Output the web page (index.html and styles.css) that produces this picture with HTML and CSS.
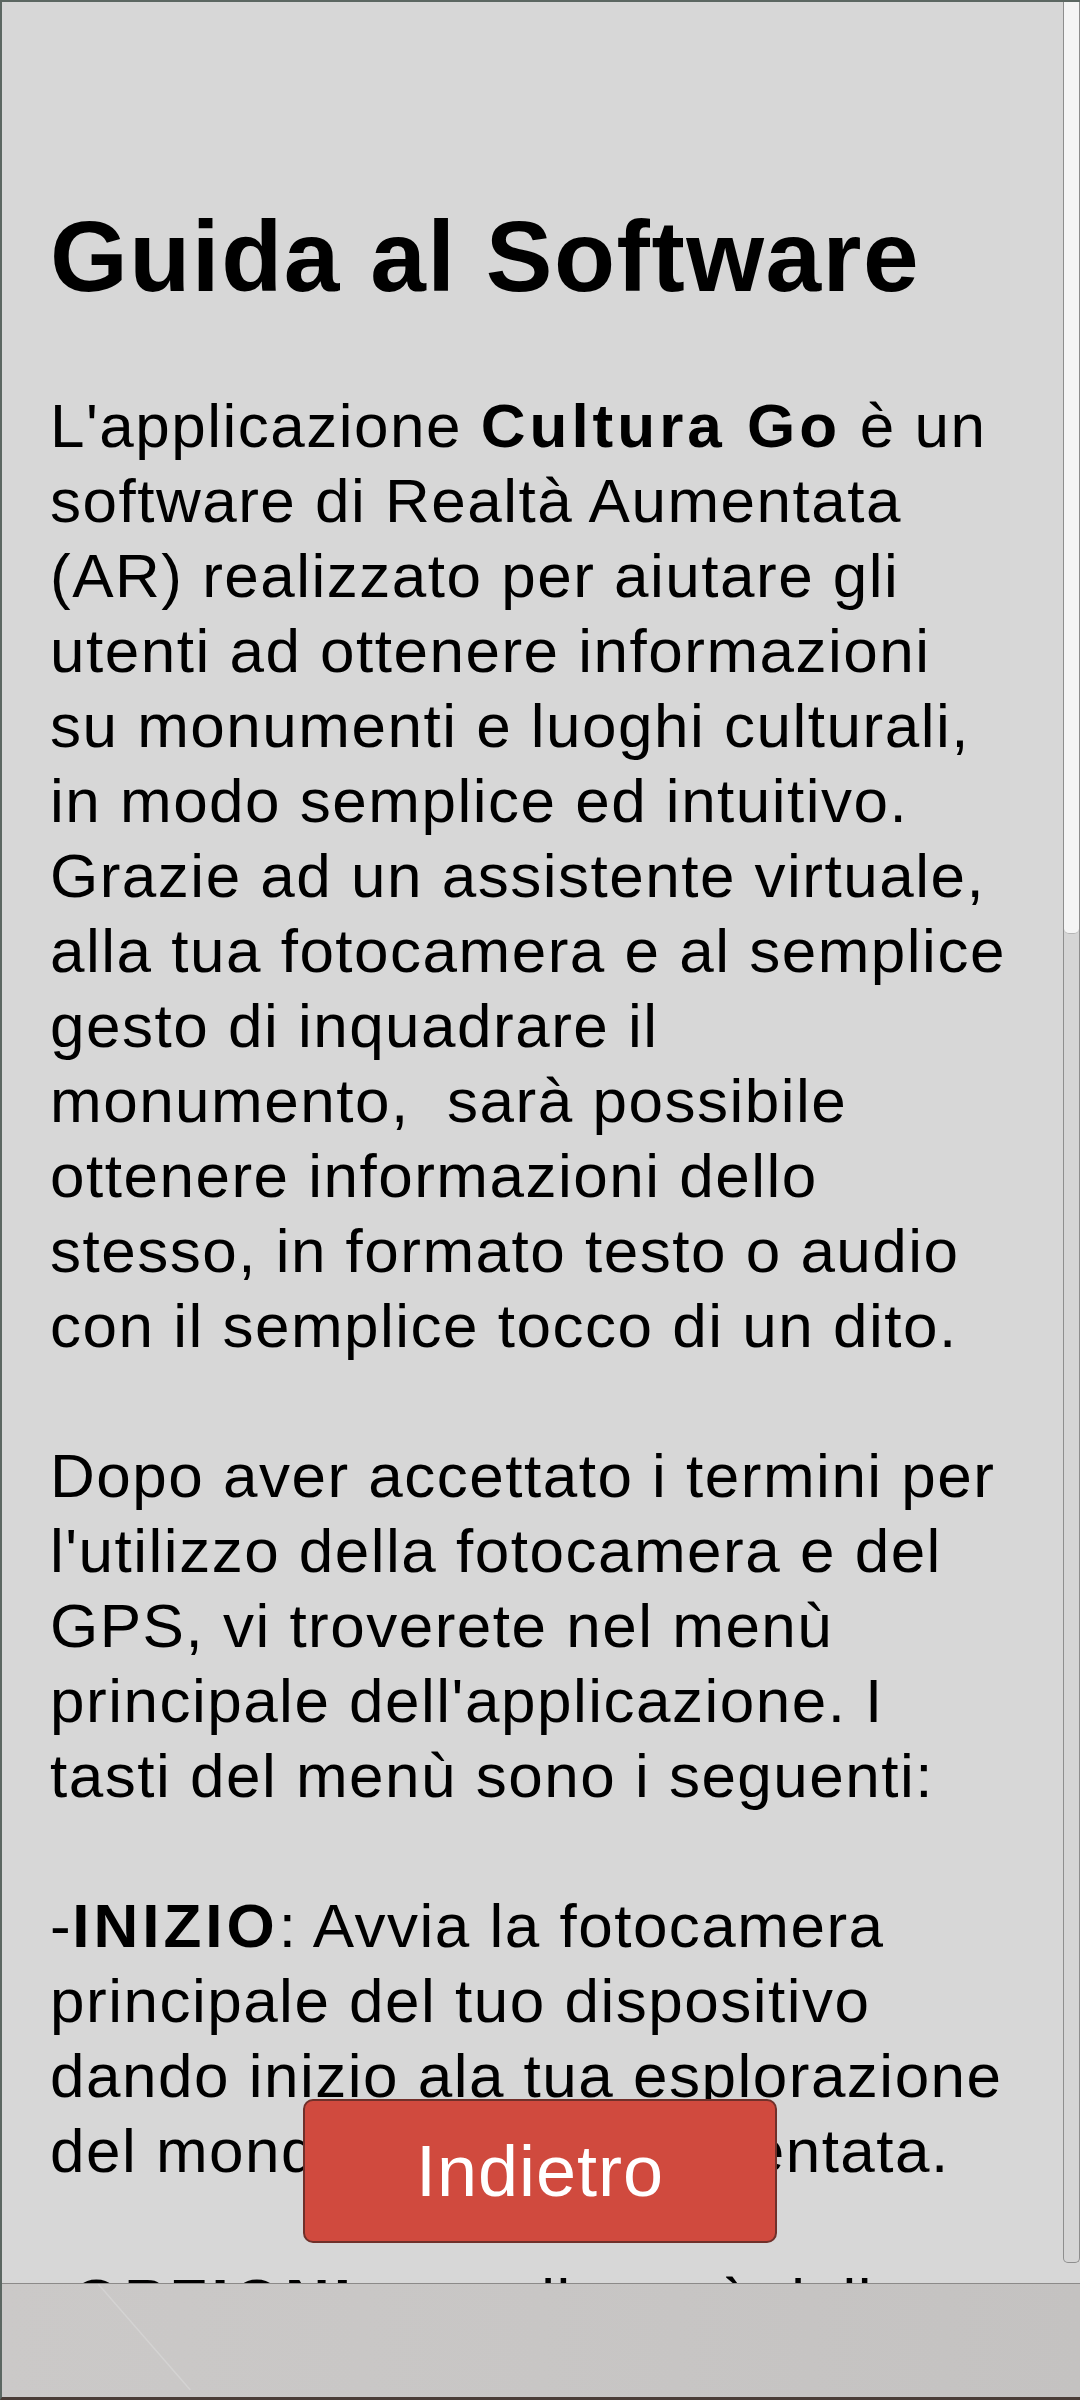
FILE: index.html
```html
<!DOCTYPE html>
<html lang="it">
<head>
<meta charset="utf-8">
<title>Guida al Software</title>
<link rel="stylesheet" href="styles.css">
</head>
<body>
<div class="screen">
  <div class="viewport">
    <div class="content">
      <h1 class="title">Guida al Software</h1>
      <p class="para">L'applicazione <b>Cultura Go</b> è un<br>software di Realtà Aumentata<br>(AR) realizzato per aiutare gli<br>utenti ad ottenere informazioni<br>su monumenti e luoghi culturali,<br>in modo semplice ed intuitivo.<br>Grazie ad un assistente virtuale,<br>alla tua fotocamera e al semplice<br>gesto di inquadrare il<br>monumento,&nbsp; sarà possibile<br>ottenere informazioni dello<br>stesso, in formato testo o audio<br>con il semplice tocco di un dito.</p>
      <p class="para">Dopo aver accettato i termini per<br>l'utilizzo della fotocamera e del<br>GPS, vi troverete nel menù<br>principale dell'applicazione. I<br>tasti del menù sono i seguenti:</p>
      <p class="para">-<b>INIZIO</b>: Avvia la fotocamera<br>principale del tuo dispositivo<br>dando inizio ala tua esplorazione<br>del mondo in realtà aumentata.</p>
      <p class="para">-<b>OPZIONI</b>: apre il menù delle<br>impostazioni dell'applicazione.</p>
    </div>
    <div class="scrollbar"><div class="thumb"></div></div>
    <button class="back">Indietro</button>
  </div>
  <footer class="bottom-bar">
    <svg class="glare" viewBox="0 0 1076 113" preserveAspectRatio="none"><line x1="96" y1="0" x2="188" y2="106" stroke="#dedede" stroke-width="1.5" stroke-opacity="0.5"/></svg>
  </footer>
</div>
</body>
</html>
```
FILE: styles.css
```css
* { box-sizing: border-box; }
html, body {
  margin: 0;
  padding: 0;
  width: 1080px;
  height: 2400px;
  overflow: hidden;
  background: #d7d7d7;
}
.screen {
  width: 1080px;
  height: 2400px;
  display: flex;
  flex-direction: column;
  border-top: 2px solid #5c6762;
  border-left: 2px solid #5c6762;
  border-bottom: 3px solid #4a3c36;
  background: #d7d7d7;
  font-family: "Liberation Sans", Arial, sans-serif;
  color: #000;
}
.viewport {
  position: relative;
  height: 2281px;
  flex: 0 0 2281px;
  display: flex;
  overflow: hidden;
}
.content {
  flex: 1;
  padding: 197px 0 0 48px;
  overflow: hidden;
}
.title {
  margin: 0 0 74px;
  font-size: 100px;
  line-height: 115px;
  font-weight: bold;
  letter-spacing: 1.5px;
  white-space: nowrap;
}
.para {
  margin: 0 0 75px;
  font-size: 62px;
  line-height: 75px;
  letter-spacing: 1.5px;
  white-space: nowrap;
}
.para b {
  letter-spacing: 4px;
}
.scrollbar {
  flex: 0 0 17px;
  width: 17px;
  height: 2261px;
  border: 1px solid #8e8e8e;
  border-top: none;
  border-radius: 0 0 5px 5px;
  background: #d5d5d5;
  overflow: hidden;
}
.thumb {
  height: 932px;
  background: #f5f5f5;
  border-bottom: 1px solid #b5b5b5;
  border-radius: 0 0 5px 5px;
}
.back {
  position: absolute;
  left: 301px;
  bottom: 40px;
  width: 474px;
  height: 144px;
  background: #d04a3e;
  border: 2px solid #70302a;
  border-radius: 10px;
  color: #fff;
  font-family: "Liberation Sans", Arial, sans-serif;
  font-size: 72px;
  letter-spacing: 1px;
  padding: 0;
}
.bottom-bar {
  position: relative;
  flex: 1;
  border-top: 1px solid #8c8a89;
  background: linear-gradient(90deg, #cbc9c8 0%, #c8c6c5 50%, #c4c2c1 100%);
  overflow: hidden;
}
.glare {
  position: absolute;
  left: 0;
  top: 0;
  width: 100%;
  height: 100%;
}
```
